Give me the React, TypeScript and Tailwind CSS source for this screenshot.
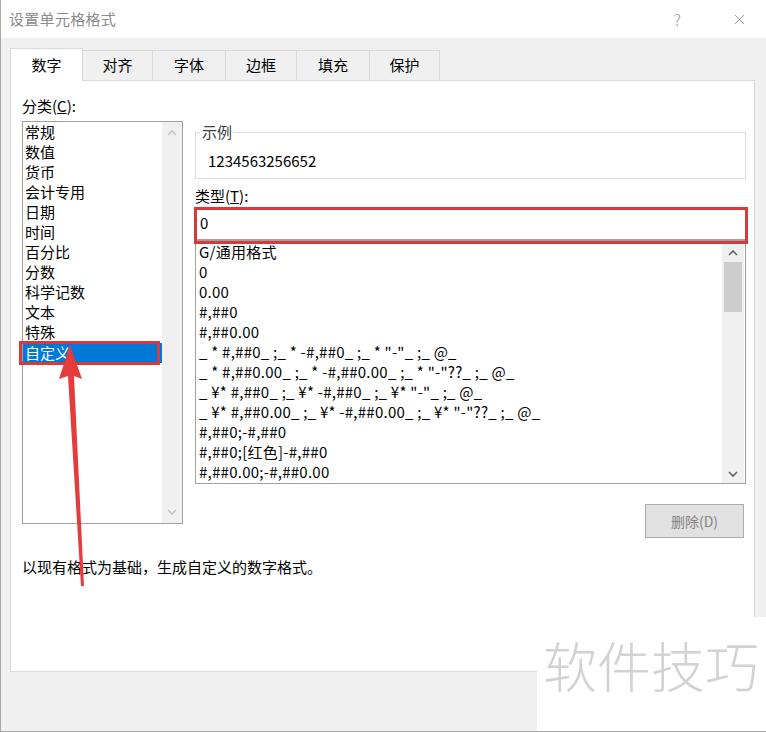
import { X } from 'lucide-react';

const categories = ['常规', '数值', '货币', '会计专用', '日期', '时间', '百分比', '分数', '科学记数', '文本', '特殊', '自定义'];

const formats = [
  'G/通用格式',
  '0',
  '0.00',
  '#,##0',
  '#,##0.00',
  '_ * #,##0_ ;_ * -#,##0_ ;_ * "-"_ ;_ @_',
  '_ * #,##0.00_ ;_ * -#,##0.00_ ;_ * "-"??_ ;_ @_',
  '_ ¥* #,##0_ ;_ ¥* -#,##0_ ;_ ¥* "-"_ ;_ @_',
  '_ ¥* #,##0.00_ ;_ ¥* -#,##0.00_ ;_ ¥* "-"??_ ;_ @_',
  '#,##0;-#,##0',
  '#,##0;[红色]-#,##0',
  '#,##0.00;-#,##0.00',
];

const tabs = ['数字', '对齐', '字体', '边框', '填充', '保护'];
const tabWidths = ['w-[73px]', 'w-[70px]', 'w-[73px]', 'w-[71px]', 'w-[73px]', 'w-[70px]'];

const Chevron = ({ up, dim }: { up?: boolean; dim?: boolean }) => (
  <svg width="10" height="6" viewBox="0 0 10 6" className={dim ? 'text-[#c4c4c4]' : 'text-[#606060]'}>
    <path d={up ? 'M1 5 L5 1 L9 5' : 'M1 1 L5 5 L9 1'} fill="none" stroke="currentColor" strokeWidth="1.6" />
  </svg>
);

export default function App() {
  return (
    <div
      className="relative w-[766px] h-[732px] overflow-hidden bg-[#f0f0f0] border-l border-b border-[#a8a8a8] text-black"
      style={{ fontFamily: '"Noto Sans CJK SC", "Noto Sans", sans-serif' }}
    >
      {/* title bar */}
      <div className="h-[38px] bg-white flex items-center pl-[8px] pr-[18px]">
        <span className="text-[15px] text-[#8a8a8a] tracking-[0.3px]">设置单元格格式</span>
        <span className="ml-auto mr-[50px] text-[16px] text-[#9a9a9a] font-light">?</span>
        <X className="w-[17px] h-[17px] text-[#8a8a8a]" strokeWidth={1.2} />
      </div>

      <div className="pl-[9px] pr-[12px] pt-[10px]">
        {/* tabs */}
        <div className="flex items-end h-[32px]">
          {tabs.map((t, i) =>
            i === 0 ? (
              <div
                key={t}
                className={`${tabWidths[i]} h-[33px] bg-white border border-b-0 border-[#d9d9d9] flex items-center justify-center text-[15px] relative z-10 -mb-px`}
              >
                {t}
              </div>
            ) : (
              <div
                key={t}
                className={`${tabWidths[i]} h-[30px] border border-l-0 border-b-0 border-[#d9d9d9] flex items-center justify-center text-[15px] bg-[#f0f0f0]`}
              >
                {t}
              </div>
            ),
          )}
        </div>

        {/* panel */}
        <div className="w-[745px] h-[592px] bg-white border border-[#d9d9d9] pl-[11px] pt-[15px] flex gap-[11px] text-[15px] leading-[20px]">
          {/* left */}
          <div className="flex flex-col w-[161px]">
            <div className="h-[20px]">
              分类(<span className="underline">C</span>):
            </div>
            <div className="mt-[5px] h-[403px] border border-[#a0a0a0] flex">
              <div className="flex-1">
                {categories.map((c) =>
                  c === '自定义' ? (
                    <div key={c} className="h-[20px] pl-[2px] mt-[1px] bg-[#0078d7] text-white">
                      {c}
                    </div>
                  ) : (
                    <div key={c} className="h-[20px] pl-[2px]">
                      {c}
                    </div>
                  ),
                )}
              </div>
              <div className="w-[20px] bg-[#f0f0f0] flex flex-col items-center justify-between py-[8px]">
                <Chevron up dim />
                <Chevron dim />
              </div>
            </div>
            <div className="mt-[33px] whitespace-nowrap">以现有格式为基础，生成自定义的数字格式。</div>
          </div>

          {/* right */}
          <div className="flex flex-col w-[554px]">
            <div className="relative mt-[36px] ml-[1px] w-[551px] h-[47px] border border-[#dcdcdc] pl-[12px] pt-[18px]">
              <span className="absolute -top-[11px] left-[4px] bg-white px-[2px] text-[#404040]">示例</span>
              1234563256652
            </div>
            <div className="mt-[7px] h-[20px] pl-[1px]">
              类型(<span className="underline">T</span>):
            </div>
            <div className="mt-[1px] h-[37px] border-[3px] border-[#d8393b] bg-white">
              <div className="h-full border-b-[2px] border-[#a0a0a0] pl-[3px] pb-[3px] flex items-center">0</div>
            </div>
            <div className="ml-[1px] w-[551px] h-[240px] border border-t-0 border-[#a0a0a0] flex">
              <div className="flex-1 -mt-[2px] pl-[3px] overflow-hidden whitespace-nowrap tracking-[0.25px]">
                {formats.map((f) => (
                  <div key={f} className="h-[20px]">
                    {f}
                  </div>
                ))}
              </div>
              <div className="w-[22px] bg-[#f0f0f0] flex flex-col mr-[1px]">
                <div className="h-[18px] flex items-center justify-center">
                  <Chevron up />
                </div>
                <div className="h-[50px] mx-[2px] bg-[#cdcdcd]" />
                <div className="flex-1" />
                <div className="h-[18px] flex items-center justify-center">
                  <Chevron />
                </div>
              </div>
            </div>
            <div className="mt-[20px] ml-[451px] w-[99px] h-[34px] bg-[#e1e1e1] border border-[#adadad] flex items-center justify-center text-[#838383] text-[14px]">
              删除(D)
            </div>
          </div>
        </div>
      </div>

      {/* red highlight around the selected category */}
      <div className="absolute left-[18px] top-[341px] w-[141px] h-[24px] border-[3px] border-[#d8393b]" />

      {/* red arrow */}
      <svg className="absolute left-[50px] top-[340px]" width="50" height="250" viewBox="0 0 50 250">
        <path d="M19 5 L31 39 L23 36 L33 246 L30 246 L17 36 L8 39 Z" fill="#e63b3b" />
      </svg>

      {/* watermark */}
      <div className="absolute left-[536px] top-[617px] w-[230px] h-[115px] bg-white flex items-start pl-[6px] pt-[16px]">
        <span className="text-[54px] leading-[64px] text-[#d2d2d2] font-light">软件技巧</span>
      </div>
    </div>
  );
}
